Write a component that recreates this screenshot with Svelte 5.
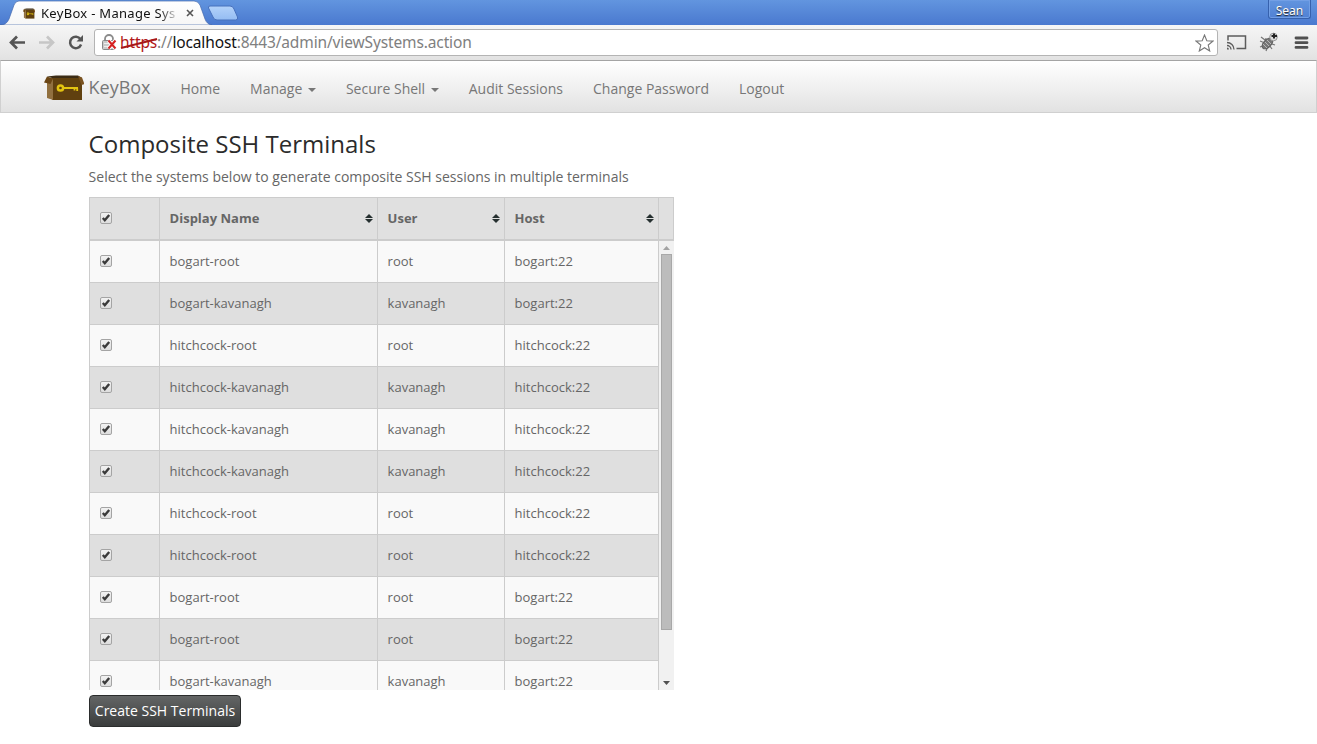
<script>
  const rows = [
    ['bogart-root', 'root', 'bogart:22'],
    ['bogart-kavanagh', 'kavanagh', 'bogart:22'],
    ['hitchcock-root', 'root', 'hitchcock:22'],
    ['hitchcock-kavanagh', 'kavanagh', 'hitchcock:22'],
    ['hitchcock-kavanagh', 'kavanagh', 'hitchcock:22'],
    ['hitchcock-kavanagh', 'kavanagh', 'hitchcock:22'],
    ['hitchcock-root', 'root', 'hitchcock:22'],
    ['hitchcock-root', 'root', 'hitchcock:22'],
    ['bogart-root', 'root', 'bogart:22'],
    ['bogart-root', 'root', 'bogart:22'],
    ['bogart-kavanagh', 'kavanagh', 'bogart:22']
  ];
  const nav = [
    { label: 'Home' },
    { label: 'Manage', menu: true },
    { label: 'Secure Shell', menu: true },
    { label: 'Audit Sessions' },
    { label: 'Change Password' },
    { label: 'Logout' }
  ];
  const columns = ['Display Name', 'User', 'Host'];
</script>

{#snippet check()}
  <svg class="check" width="12" height="12" viewBox="0 0 12 12">
    <defs>
      <linearGradient id="ck" x2="0" y2="1"><stop stop-color="#f3f3f3" /><stop offset="1" stop-color="#dcdcdc" /></linearGradient>
    </defs>
    <rect x=".5" y=".5" width="11" height="11" rx="1.5" fill="url(#ck)" stroke="#a4a4a4" />
    <path d="M2.800 6 4.800 8.200 9.200 3" fill="none" stroke="#3a3a3a" stroke-width="2.400" />
  </svg>
{/snippet}

{#snippet box()}
  <path d="M8 3H38V25H8z" fill="#60400f" />
  <path d="M3 6 9 4V25l-6-2z" fill="#91703f" />
  <path d="M3 1.500 12 .5H34l4 2.500H8z" fill="#3b2b14" />
  <path d="M0 7.500 3 1.500 9 3.500 6.500 9z" fill="#6a4514" />
  <path d="M34 1 38 2.500 40.500 9 37.500 10z" fill="#7a5220" />
  <circle cx="16.500" cy="13" r="2.600" fill="none" stroke="#e3c411" stroke-width="2.500" />
  <path d="M19 13H34M30.500 13v2.500M33.200 13v3" fill="none" stroke="#e3c411" stroke-width="1.800" />
{/snippet}

<div class="tabs">
  <svg class="tabshape" width="242" height="25" viewBox="0 0 242 25">
    <defs>
      <linearGradient id="tb" x2="0" y2="1"><stop stop-color="#fff" /><stop offset="1" stop-color="#f6f6f6" /></linearGradient>
      <linearGradient id="nt" x2="0" y2="1"><stop stop-color="#b3d2fa" /><stop offset="1" stop-color="#94bcf3" /></linearGradient>
    </defs>
    <path d="M0 25C5 25 7 23 9 19L14 5Q15.5 1 19 1H194Q198 1 200 5L205 19Q207 24.5 212 25Z" fill="url(#tb)" stroke="#4469ad" stroke-width=".7" />
    <path d="M210 6H230Q233 6 234 9L237.500 17Q238.500 20 235.500 20H217Q214 20 213 17L208.500 8Q208 6 210 6Z" fill="url(#nt)" stroke="#4770bc" />
  </svg>
  <div class="tabinfo">
    <svg width="12" height="11" viewBox="0 -1 40 27" preserveAspectRatio="none">{@render box()}</svg>
    <span class="title">KeyBox - Manage Sys</span>
    <svg width="8" height="8" viewBox="0 0 8 8"><path d="m1 1 6 6m0-6L1 7" stroke="#555" stroke-width="1.6" /></svg>
  </div>
  <div class="person">Sean</div>
</div>
<div class="toolbar">
  <svg width="92" height="35" viewBox="0 25 92 35" fill="none">
    <path d="M25 42.500H11.500M17 36.500l-6 6 6 6" stroke="#555" stroke-width="2.7" />
    <path d="M39 42.500H52.500M47 36.500l6 6-6 6" stroke="#c6c6c6" stroke-width="2.700" />
    <path d="M80.500 39.200a5.700 5.700 0 1 0 .6 5.300" stroke="#555" stroke-width="2.500" />
    <path d="M83 35v6.500h-6.500z" fill="#555" />
  </svg>
  <div class="omni">
    <svg width="16" height="17" viewBox="0 0 16 17" fill="none">
      <path d="M4 7V5a4 4 0 0 1 8 0v2" stroke="#8b8b8b" stroke-width="1.800" />
      <rect x="1.500" y="6.500" width="12" height="9" rx="1" fill="#c9c9c9" stroke="#888" />
      <path d="M3 9.500h7m-7 3h7" stroke="#eee" />
      <path d="m7.500 6.500 7 8m0-8-7 8" stroke="#fff" stroke-width="4" />
      <path d="m7.500 6.500 7 8m0-8-7 8" stroke="#d52020" stroke-width="2" />
    </svg>
    <div class="url"><span class="https">https<svg width="39" height="13" viewBox="0 0 39 13"><path d="M1 11 37 2" stroke="#a81818" stroke-width="2" /></svg></span>://<b>localhost</b>:8443/admin/viewSystems.action</div>
    <svg class="star" width="19" height="18" viewBox="0 0 19 18"><path d="m9.500 1 2.300 5.700 6.100.4-4.700 3.900 1.500 6-5.200-3.300L4.300 17l1.500-6L1.100 7.100l6.100-.4z" fill="#fff" stroke="#777" stroke-width="1.100" /></svg>
  </div>
  <svg width="99" height="35" viewBox="1218 25 99 35" fill="none">
    <path d="M1228 40.500v-4.500h17.500v12.500h-9" stroke="#5c5c5c" stroke-width="1.500" />
    <path d="M1227 42.500a7 7 0 0 1 7 7M1227 45.500a4 4 0 0 1 4 4" stroke="#5c5c5c" stroke-width="1.300" />
    <path d="M1227 47.500a2 2 0 0 1 2 2h-2z" fill="#5c5c5c" />
    <path d="m1260 41 5 2 1-5m-6 9 5-2m1 6 2-5m4 3-3-4m6 0-6-2m-4-3-4-3" stroke="#777" stroke-width="1.200" />
    <ellipse cx="1267.500" cy="43.500" rx="6.500" ry="3.800" transform="rotate(-45 1267.500 43.500)" fill="#777" stroke="#606060" />
    <path d="m1263 44 4 4m-2-6 4 4m-2-6 4 4" stroke="#b8b8b8" />
    <circle cx="1273.500" cy="37" r="3.800" fill="#ddd" stroke="#999" />
    <path d="M1274 33.500v5M1271.500 36h5.500" stroke="#222" stroke-width="2" />
    <path d="M1296 38h11M1296 42.700h11M1296 47.400h11" stroke="#505050" stroke-width="2.800" stroke-linecap="round" />
  </svg>
</div>
<nav>
  <svg class="logo" width="40" height="26" viewBox="0 0 40 26">{@render box()}</svg>
  <span class="brand">KeyBox</span>
  {#each nav as n}
    <span class="item">{n.label}{#if n.menu}<i></i>{/if}</span>
  {/each}
</nav>
<main>
  <h3>Composite SSH Terminals</h3>
  <p>Select the systems below to generate composite SSH sessions in multiple terminals</p>
  <div class="table">
    <div class="row head">
      <div>{@render check()}</div>
      {#each columns as c}
        <div>{c}<svg class="sort" width="8" height="9" viewBox="0 0 8 9"><path d="M4 0 8 4H0zM0 5h8L4 9z" fill="#263030" /></svg></div>
      {/each}
      <div></div>
    </div>
    <div class="scroll">
      <div class="rows">
        {#each rows as r}
          <div class="row">
            <div>{@render check()}</div>
            {#each r as cell}<div>{cell}</div>{/each}
          </div>
        {/each}
      </div>
      <div class="bar">
        <svg width="7" height="4" viewBox="0 0 7 4"><path d="M3.500 0 7 4H0z" fill="#a3a3a3" /></svg>
        <div class="thumb"></div>
        <svg width="7" height="4" viewBox="0 0 7 4"><path d="M0 0h7L3.500 4z" fill="#505050" /></svg>
      </div>
    </div>
  </div>
  <button>Create SSH Terminals</button>
</main>

<style>
  :global(body) { background: #fff; overflow: hidden; }
  :global(#app) { font-family: "Open Sans", sans-serif; color: #666; }
  svg { display: block; flex: none; }
  .tabs { height: 25px; background: linear-gradient(#6295df, #4a79cf); display: flex; position: relative; font-family: "Noto Sans", sans-serif; }
  .tabinfo { position: absolute; left: 23px; top: 4px; height: 18px; display: flex; align-items: center; }
  .title { width: 138px; margin: 0 7px 0 6px; white-space: nowrap; font-size: 13px; letter-spacing: .3px; line-height: 18px; color: #111; -webkit-mask-image: linear-gradient(90deg, #000 86%, transparent); mask-image: linear-gradient(90deg, #000 86%, transparent); }
  .person { margin-left: auto; margin-right: 6px; width: 41px; height: 18px; border: 1px solid #3661ad; border-top: 0; border-radius: 0 0 3px 3px; box-shadow: inset 0 0 0 1px #729fe5; color: #fff; font-size: 12px; line-height: 21px; text-align: center; text-shadow: 0 1px 1px #222; }
  .toolbar { height: 35px; box-sizing: border-box; background: linear-gradient(#f6f6f6, #e2e2e2); display: flex; }
  .omni { margin: 4px 0 0 2px; width: 1124px; height: 27px; box-sizing: border-box; border: 1px solid #b4b4b4; border-radius: 3px; background: #fff; display: flex; align-items: center; padding: 0 3px 0 6px; }
  .url { margin-left: 3px; padding-bottom: 2px; font-family: "Noto Sans", sans-serif; font-size: 15.5px; letter-spacing: -.13px; color: #808080; white-space: nowrap; }
  .url b { font-weight: 400; color: #111; }
  .https { color: #b21818; position: relative; }
  .https svg { position: absolute; left: 0; top: 6px; }
  .star { margin-left: auto; }
  nav { height: 53px; box-sizing: border-box; border: 1px solid #d0d0d0; border-top: 1px solid #a4a4a4; background: linear-gradient(#fff, #e2e2e2); display: flex; align-items: center; padding: 3px 0 0 43px; font-size: 14px; color: #777; white-space: nowrap; }
  .logo { margin-right: 4.500px; }
  .brand { font-size: 18px; margin: -2px 15px 0 0; }
  .item { padding: 0 15px; display: flex; align-items: center; }
  .item i { margin: 3px 0 0 5.600px; border: 4px solid transparent; border-top-color: #777; border-bottom: 0; }
  main { padding: 14px 0 0 89px; display: flex; flex-direction: column; align-items: flex-start; }
  h3 { margin: 0 0 0 -.4px; font-weight: 400; font-size: 24px; line-height: 33px; color: #2b2b2b; }
  p { margin: 7px 0 10px -.4px; font-size: 14px; line-height: 20px; }
  .table { width: 585px; font-size: 13px; }
  .row { display: grid; grid-template-columns: 70px 218px 127px 154px; height: 42px; box-sizing: border-box; border-bottom: 1px solid #ccc; background: #f9f9f9; }
  .row > div { border-left: 1px solid #ccc; padding: 0 10px 2px 9.600px; display: flex; align-items: center; }
  .row > div:first-child { padding-left: 10px; }
  .row:nth-child(even) { background: #dfdfdf; }
  .head { grid-template-columns: 70px 218px 127px 154px 14px; height: 44px; border: 1px solid #ccc; border-left: 0; border-bottom-width: 2px; background: #e0e0e0; font-weight: 700; }
  .head > div { padding-right: 4px; }
  .head > div:last-child { padding: 0; }
  .sort { margin-left: auto; position: relative; top: 1px; }
  .scroll { display: flex; height: 449px; overflow: hidden; }
  .rows { width: 569px; }
  .bar { width: 16px; box-sizing: border-box; border-left: 1px solid #ccc; background: #f1f1f1; display: flex; flex-direction: column; align-items: center; height: 449px; padding: 5px 0 5px; }
  .thumb { margin: 4px 0 auto; width: 11px; height: 376px; box-sizing: border-box; background: #bcbcbc; border: 1px solid #a8a8a8; }
  button { margin-top: 5px; width: 152px; height: 32px; padding: 0 0 2px; border: 1px solid #2b2d2d; border-radius: 4px; background: linear-gradient(#646666, #3a3c3c); color: #fff; font: 14px "Open Sans", sans-serif; white-space: nowrap; }
</style>
